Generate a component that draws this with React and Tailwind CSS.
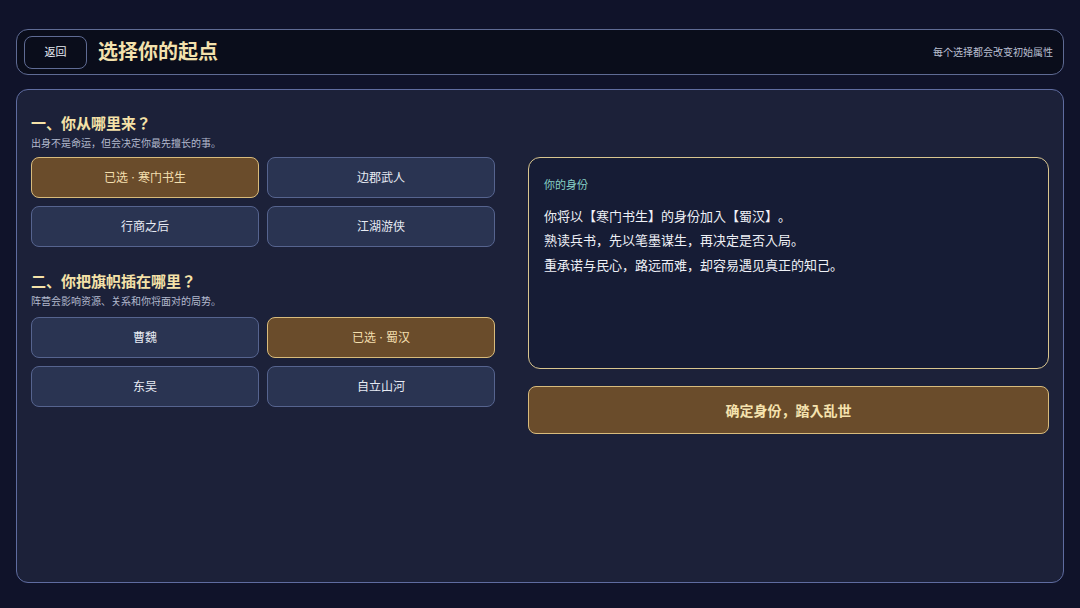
import { useState } from 'react';

const ORIGINS = ['寒门书生', '边郡武人', '行商之后', '江湖游侠'];
const FACTIONS = ['曹魏', '蜀汉', '东吴', '自立山河'];

const font = { fontFamily: 'Inter, "Noto Sans CJK JP", sans-serif' };

function OptionGrid({ items, selected, onSelect }) {
  return (
    <div className="grid grid-cols-2 gap-2">
      {items.map(item => {
        const isSelected = item === selected;
        return (
          <button
            key={item}
            onClick={() => onSelect(item)}
            className={`h-[41px] rounded-lg border text-[12px] ${
              isSelected
                ? 'border-[#d8bb7c] bg-[#6a4c2b] text-[#f3dfae]'
                : 'border-[#56648f] bg-[#2a3452] text-[#e6eaf3]'
            }`}
          >
            {isSelected ? `已选 · ${item}` : item}
          </button>
        );
      })}
    </div>
  );
}

export default function App() {
  const [origin, setOrigin] = useState('寒门书生');
  const [faction, setFaction] = useState('蜀汉');

  return (
    <div
      className="min-h-screen w-full bg-[#10132a] p-4 pt-[29px] flex flex-col gap-[14px] [text-spacing-trim:space-all]"
      style={font}
    >
      <header className="h-[46px] rounded-xl border border-[#5f6b94] bg-[#0a0d1b] flex items-center pl-[7px] pr-[10px]">
        <button className="w-[63px] h-[33px] rounded-lg border border-[#5f6b94] text-[11px] text-[#e6e9f2]">
          返回
        </button>
        <h1 className="ml-[11px] text-[20px] font-bold text-[#f3e1ad]">选择你的起点</h1>
        <span className="ml-auto text-[10px] text-[#b9bfd0]">每个选择都会改变初始属性</span>
      </header>

      <main className="h-[494px] rounded-xl border border-[#5f6ca0] bg-[#1c2139] px-[14px] pt-[23px]">
        <div className="grid grid-cols-[464px_1fr] gap-[33px]">
          <div>
            <h2 className="text-[15px] leading-[22px] font-bold text-[#f5e2a8]">一、你从哪里来？</h2>
            <p className="text-[10px] leading-[16px] text-[#b3bace] mb-[6px]">出身不是命运，但会决定你最先擅长的事。</p>
            <OptionGrid items={ORIGINS} selected={origin} onSelect={setOrigin} />

            <h2 className="mt-[24px] text-[15px] leading-[22px] font-bold text-[#f5e2a8]">二、你把旗帜插在哪里？</h2>
            <p className="text-[10px] leading-[16px] text-[#b3bace] mb-[8px]">阵营会影响资源、关系和你将面对的局势。</p>
            <OptionGrid items={FACTIONS} selected={faction} onSelect={setFaction} />
          </div>

          <div className="pt-[44px] flex flex-col gap-[17px]">
            <section className="h-[212px] rounded-xl border border-[#d8c58f] bg-[#161c35] px-[15px] pt-[19px]">
              <div className="text-[11px] text-[#86d0c6] mb-[10px]">你的身份</div>
              <div className="text-[13px] leading-[24.5px] text-[#eef0f6]">
                <p>你将以【{origin}】的身份加入【{faction}】。</p>
                <p>熟读兵书，先以笔墨谋生，再决定是否入局。</p>
                <p>重承诺与民心，路远而难，却容易遇见真正的知己。</p>
              </div>
            </section>
            <button className="h-[48px] rounded-lg border border-[#d8bb7c] bg-[#6a4c2b] text-[14px] font-bold text-[#f5e2ae]">
              确定身份，踏入乱世
            </button>
          </div>
        </div>
      </main>
    </div>
  );
}
